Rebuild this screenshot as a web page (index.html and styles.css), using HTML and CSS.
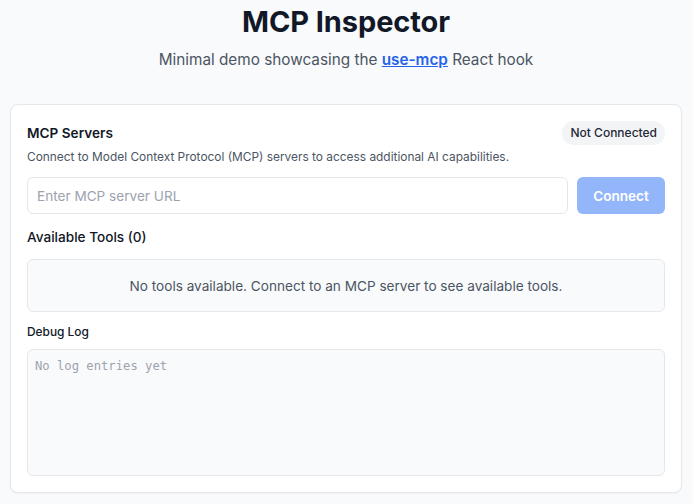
FILE: index.html
```html
<!DOCTYPE html>
<html lang="en">
<head>
<meta charset="utf-8">
<title>MCP Inspector</title>
<link rel="stylesheet" href="styles.css">
</head>
<body>
<main class="page">
  <header class="hero">
    <h1 class="title">MCP Inspector</h1>
    <p class="subtitle">Minimal demo showcasing the <a class="link" href="#">use-mcp</a> React hook</p>
  </header>
  <section class="card">
    <div class="card-head">
      <h2 class="card-title">MCP Servers</h2>
      <span class="badge">Not Connected</span>
    </div>
    <p class="card-desc">Connect to Model Context Protocol (MCP) servers to access additional AI capabilities.</p>
    <div class="connect-row">
      <input class="url-input" type="text" placeholder="Enter MCP server URL">
      <button class="connect-btn" disabled>Connect</button>
    </div>
    <h3 class="section-title">Available Tools (0)</h3>
    <div class="tools-empty">No tools available. Connect to an MCP server to see available tools.</div>
    <h4 class="log-title">Debug Log</h4>
    <div class="log-box">No log entries yet</div>
  </section>
</main>
</body>
</html>
```
FILE: styles.css
```css
* { box-sizing: border-box; }
html, body { margin: 0; padding: 0; }
body {
  background: #f9fafb;
  font-family: Inter, "Noto Sans", sans-serif;
  color: #111827;
  width: 693px;
  height: 504px;
  overflow: hidden;
}
.page {
  padding: 4px 11px 0 10px;
}
.hero {
  text-align: center;
}
.title {
  margin: 0;
  font-size: 29px;
  line-height: 36px;
  font-weight: 700;
  color: #111827;
  letter-spacing: -0.1px;
}
.subtitle {
  margin: 9px 0 0;
  font-size: 15.3px;
  line-height: 22px;
  color: #4b5563;
}
.link {
  color: #2563eb;
  font-weight: 600;
  text-decoration: underline;
}
.card {
  margin-top: 33px;
  background: #fff;
  border: 1px solid #e5e7eb;
  border-radius: 8px;
  padding: 16px;
  height: 389px;
  box-shadow: 0 1px 2px rgba(0,0,0,0.04);
}
.card-head {
  display: flex;
  justify-content: space-between;
  align-items: center;
}
.card-title {
  margin: 0;
  font-size: 13.6px;
  line-height: 24px;
  font-weight: 600;
}
.badge {
  background: #f3f4f6;
  color: #1f2937;
  font-size: 12px;
  font-weight: 500;
  line-height: 16px;
  padding: 4px 8px;
  border-radius: 9999px;
}
.card-desc {
  margin: 4px 0 0;
  font-size: 11.9px;
  line-height: 16px;
  color: #4b5563;
}
.connect-row {
  display: flex;
  gap: 9px;
  margin-top: 12px;
}
.url-input {
  flex: 1;
  height: 37px;
  border: 1px solid #e5e7eb;
  border-radius: 6px;
  padding: 0 9px;
  font-family: inherit;
  font-size: 13.6px;
  color: #111827;
  background: #fff;
  outline: none;
}
.url-input::placeholder { color: #9ca3af; }
.connect-btn {
  width: 88px;
  height: 37px;
  border: 0;
  border-radius: 6px;
  background: #93b5f9;
  color: #fff;
  font-family: inherit;
  font-size: 13.6px;
  font-weight: 600;
}
.section-title {
  margin: 13px 0 0;
  font-size: 13.6px;
  line-height: 20px;
  font-weight: 500;
}
.tools-empty {
  margin-top: 12px;
  height: 53px;
  border: 1px solid #e5e7eb;
  border-radius: 6px;
  background: #f9fafb;
  display: flex;
  align-items: center;
  justify-content: center;
  font-size: 13.6px;
  color: #4b5563;
}
.log-title {
  margin: 12px 0 0;
  font-size: 11.9px;
  line-height: 16px;
  font-weight: 500;
}
.log-box {
  margin-top: 9px;
  height: 127px;
  border: 1px solid #e5e7eb;
  border-radius: 6px;
  background: #f9fafb;
  padding: 8px 7px;
  font-family: "DejaVu Sans Mono", monospace;
  font-size: 12.2px;
  line-height: 16px;
  color: #9ca3af;
}
```
